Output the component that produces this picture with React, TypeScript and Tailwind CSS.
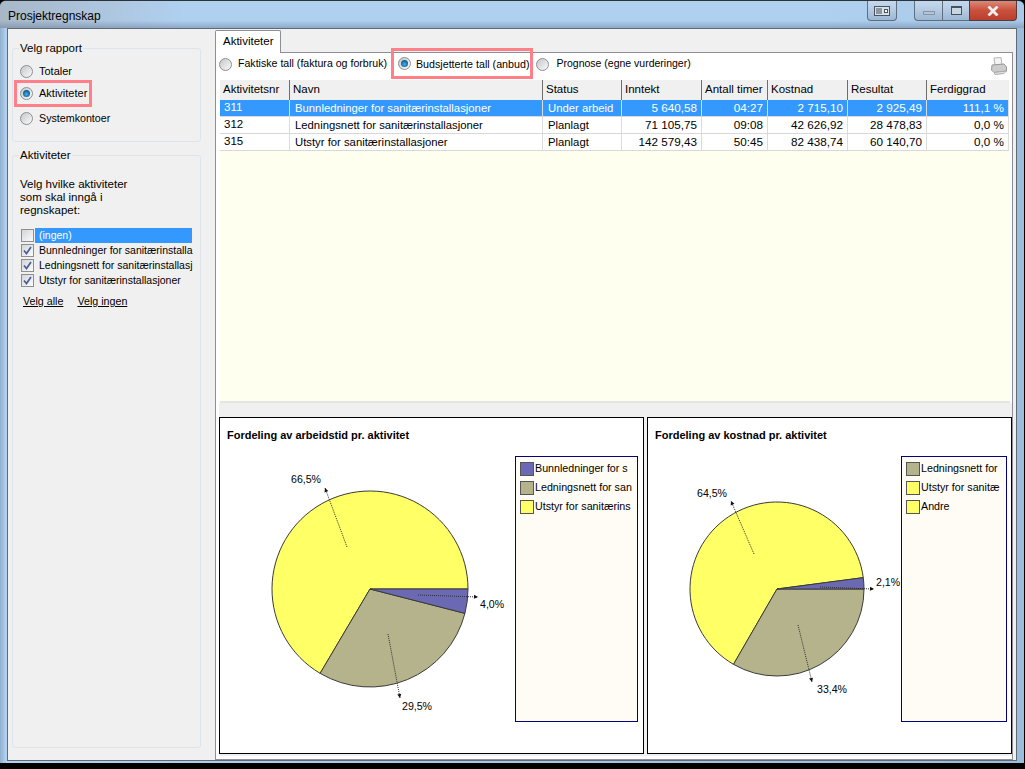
const font = { fontFamily: '"Liberation Sans", Arial, sans-serif' };

function Radio({ checked }: { checked?: boolean }) {
  return (
    <span className="flex h-[13px] w-[13px] shrink-0 items-center justify-center rounded-full border border-[#8c8f94] bg-[linear-gradient(135deg,#c4c6c8,#fbfbfb)]">
      {checked && (
        <span className="h-[7px] w-[7px] rounded-full bg-[radial-gradient(circle_at_50%_60%,#3fb4ea,#0d5b8c_70%,#1c3f5c)]" />
      )}
    </span>
  );
}

function Check({ checked }: { checked?: boolean }) {
  return (
    <span className="flex h-[13px] w-[13px] shrink-0 items-center justify-center border border-[#8e8f8f] bg-[linear-gradient(135deg,#d4d5d8,#fbfbfb)]">
      {checked && (
        <svg width="9" height="9" viewBox="0 0 9 9">
          <path d="M1 4.5 L3.5 7.5 L8 1" fill="none" stroke="#4a5f97" strokeWidth="1.7" />
        </svg>
      )}
    </span>
  );
}

function CaptionIcons() {
  const glass = 'bg-[linear-gradient(#c4d8ec,#b4cce4_45%,#9db8d2)] border-[#5f6f80]';
  return (
    <div className="flex h-[20px] items-start">
      <div className={`mr-[17px] flex h-[20px] w-[30px] items-center justify-center rounded-b-[4px] border border-t-0 ${glass}`}>
        <svg width="16" height="10" viewBox="0 0 16 10">
          <rect x="0.5" y="0.5" width="15" height="9" fill="#d8e0e8" stroke="#4a545e" />
          <rect x="2" y="2" width="6" height="6" fill="#8c97a3" />
          <rect x="10.5" y="3.5" width="3" height="3" fill="#fff" stroke="#4a545e" />
        </svg>
      </div>
      <div className={`flex h-[20px] w-[28px] items-center justify-center rounded-bl-[4px] border border-t-0 border-r-0 ${glass}`}>
        <span className="mt-[4px] h-[4px] w-[12px] border border-[#8796a6] bg-[#b6c4d2]" />
      </div>
      <div className={`flex h-[20px] w-[27px] items-center justify-center border border-t-0 border-r-0 ${glass}`}>
        <span className="h-[9px] w-[11px] border border-t-2 border-[#47515c] bg-[#c8d6e4]" />
      </div>
      <div className="flex h-[20px] w-[48px] items-center justify-center rounded-br-[4px] border border-t-0 border-[#5a3a36] bg-[linear-gradient(#dc8a78,#c8503c_50%,#b8402c)]">
        <svg width="12" height="10" viewBox="0 0 12 10">
          <path d="M1.5 0.5 L10.5 9.5 M10.5 0.5 L1.5 9.5" stroke="#f0f0f0" strokeWidth="2.8" />
        </svg>
      </div>
    </div>
  );
}

function Printer() {
  return (
    <svg width="16" height="18" viewBox="0 0 16 18">
      <path d="M3 1 L10 0.5 L11 8 L4 8 Z" fill="#f4f4f4" stroke="#b4b4b4" />
      <path d="M1 8 L13 7 L15.5 10 L15.5 14 L3 15.5 L0.5 13 Z" fill="#cccccc" stroke="#989898" />
      <path d="M3 15.5 L15.5 14 L13 16.5 L4 17.5 Z" fill="#e4e4e4" stroke="#acacac" />
    </svg>
  );
}

const cols = [
  { label: 'Aktivitetsnr', w: 'w-[70px]' },
  { label: 'Navn', w: 'w-[253px]' },
  { label: 'Status', w: 'w-[79px]' },
  { label: 'Inntekt', w: 'w-[80px]' },
  { label: 'Antall timer', w: 'w-[66px]' },
  { label: 'Kostnad', w: 'w-[80px]' },
  { label: 'Resultat', w: 'w-[79px]' },
  { label: 'Ferdiggrad', w: 'w-[82px]' },
];

const rows = [
  ['311', 'Bunnledninger for sanitærinstallasjoner', 'Under arbeid', '5 640,58', '04:27', '2 715,10', '2 925,49', '111,1 %'],
  ['312', 'Ledningsnett for sanitærinstallasjoner', 'Planlagt', '71 105,75', '09:08', '42 626,92', '28 478,83', '0,0 %'],
  ['315', 'Utstyr for sanitærinstallasjoner', 'Planlagt', '142 579,43', '50:45', '82 438,74', '60 140,70', '0,0 %'],
];

function Grid() {
  return (
    <div className="h-[323px] bg-[#fffff0] border-b-2 border-[#e4e4e4]">
      <div className="flex h-[20px] w-[789px] bg-[#f0f0f0]">
        {cols.map((c) => (
          <div key={c.label} className={`${c.w} flex shrink-0 items-center border-r border-[#6e6e6e] pl-[3px] text-[11.5px] text-black last:border-r-0`}>
            {c.label}
          </div>
        ))}
      </div>
      {rows.map((r, ri) => (
        <div
          key={r[0]}
          className={`flex h-[17px] w-[789px] border-b border-[#d8d8d8] ${ri === 0 ? 'bg-[#3399ff] text-white' : 'bg-white text-black'}`}
        >
          {r.map((v, i) => (
            <div
              key={i}
              className={`${cols[i].w} flex shrink-0 items-center border-r border-[#dcdcdc] whitespace-nowrap ${
                i > 2 ? 'justify-end pr-[4px] text-[11.7px]' : i === 0 ? 'pl-[4px] text-[11.5px]' : 'pl-[5px] text-[11.3px]'
              }`}
            >
              {v}
            </div>
          ))}
        </div>
      ))}
    </div>
  );
}

function Leader({ x1, y1, x2, y2 }: { x1: number; y1: number; x2: number; y2: number }) {
  const a = (Math.atan2(y2 - y1, x2 - x1) * 180) / Math.PI;
  return (
    <>
      <line x1={x1} y1={y1} x2={x2} y2={y2} stroke="#303030" strokeWidth="1" strokeDasharray="1 1" />
      <path d="M0 0 L-4 -2 L-4 2 Z" fill="#101010" transform={`translate(${x2} ${y2}) rotate(${a})`} />
    </>
  );
}

function pt(cx: number, cy: number, r: number, deg: number) {
  const a = (deg * Math.PI) / 180;
  return `${cx + r * Math.cos(a)} ${cy + r * Math.sin(a)}`;
}

function wedge(cx: number, cy: number, r: number, from: number, to: number) {
  const large = to - from > 180 ? 1 : 0;
  return `M${cx} ${cy} L${pt(cx, cy, r, from)} A${r} ${r} 0 ${large} 1 ${pt(cx, cy, r, to)} Z`;
}

const PURPLE = '#6b69b3';
const TAN = '#b4b38c';
const YELLOW = '#ffff66';

function LegendRow({ color, label }: { color: string; label: string }) {
  return (
    <div className="flex h-[19px] items-center whitespace-nowrap text-[10.7px] text-black">
      <span className="mr-[1px] h-[14px] w-[14px] shrink-0 border border-[#555555]" style={{ background: color }} />
      {label}
    </div>
  );
}

function Chart({
  title,
  width,
  legendW,
  viewBox,
  svgW,
  legend,
  children,
}: {
  title: string;
  width: string;
  legendW: string;
  viewBox: string;
  svgW: number;
  legend: { color: string; label: string }[];
  children: React.ReactNode;
}) {
  return (
    <div className={`${width} flex h-[337px] shrink-0 flex-col border border-black bg-white`}>
      <div className="h-[38px] pl-[7px] pt-[10px] text-[11px] font-bold leading-[14px] text-black">{title}</div>
      <div className="flex h-[266px]">
        <svg width={svgW} height="266" viewBox={viewBox} className="shrink-0">
          {children}
        </svg>
        <div className={`${legendW} shrink-0 border border-[#000080] bg-[#fffcf6] pl-[4px] pt-[2px]`}>
          {legend.map((l) => (
            <LegendRow key={l.label} {...l} />
          ))}
        </div>
      </div>
    </div>
  );
}

export default function App() {
  return (
    <div className="h-[769px] w-[1025px] overflow-hidden bg-black" style={font}>
      <div className="flex h-[763px] w-[1024px] flex-col rounded-t-[6px] border-t border-[#2c3238] bg-[linear-gradient(90deg,#8fb0d0,#b4d2f0_0.6%,#9cbcdc_100%)]">
        <div className="flex h-[27px] shrink-0 items-start justify-between rounded-t-[6px] bg-[linear-gradient(transparent_72%,rgba(90,110,140,0.4)),linear-gradient(90deg,#a8b8c8,#b0d0f0_18%,#b0d0f0_80%,#a8c8e8)] px-[7px]">
          <div className="pl-[1px] pt-[8px] text-[12px] leading-[14px] text-black">Prosjektregnskap</div>
          <CaptionIcons />
        </div>
        <div className="flex min-h-0 flex-1 px-[7px] pb-[2px]">
          <div className="flex min-w-0 flex-1 border border-[#5f6b78] bg-[#f0f0f0] text-[11px] text-black">
            <div className="flex w-[207px] shrink-0 flex-col pl-[4px] pt-[19px]">
              <div className="h-[94px] w-[189px] rounded-[3px] border border-[#dce4ec]">
                <div className="-mt-[7px] ml-[6px] w-fit bg-[#f0f0f0] px-[1px] text-[11.5px] leading-[13px]">Velg rapport</div>
                <div className="ml-[7px] mt-[5px] flex h-[22px] items-center gap-[6px]">
                  <Radio />
                  Totaler
                </div>
                <div className="relative ml-[7px] flex h-[22px] items-center gap-[6px]">
                  <Radio checked />
                  Aktiviteter
                  <span className="absolute -left-[6px] -top-[2px] h-[27px] w-[78px] border-[3px] border-[#ff8088]" />
                </div>
                <div className="ml-[7px] mt-[3px] flex h-[22px] items-center gap-[6px] text-[10.7px]">
                  <Radio />
                  Systemkontoer
                </div>
              </div>
              <div className="mt-[13px] h-[593px] w-[189px] rounded-[3px] border border-[#dce4ec]">
                <div className="-mt-[7px] ml-[6px] w-fit bg-[#f0f0f0] px-[1px] text-[11.5px] leading-[13px]">Aktiviteter</div>
                <div className="ml-[7px] mt-[16px] text-[11.5px] leading-[13px]">
                  Velg hvilke aktiviteter
                  <br />
                  som skal inngå i
                  <br />
                  regnskapet:
                </div>
                <div className="ml-[8px] mt-[11px] w-[171px] text-[10.5px]">
                  {[
                    ['(ingen)', false],
                    ['Bunnledninger for sanitærinstalla', true],
                    ['Ledningsnett for sanitærinstallasj', true],
                    ['Utstyr for sanitærinstallasjoner', true],
                  ].map(([label, on], i) => (
                    <div key={label as string} className="flex h-[15px] items-center gap-[1px] whitespace-nowrap">
                      <Check checked={on as boolean} />
                      <span className={`flex h-[15px] flex-1 items-center pl-[4px] ${i === 0 ? 'bg-[#3399ff] text-white' : ''}`}>
                        {label as string}
                      </span>
                    </div>
                  ))}
                </div>
                <div className="ml-[10px] mt-[5px] flex gap-[14px] text-[10.7px] underline">
                  <span>Velg alle</span>
                  <span>Velg ingen</span>
                </div>
              </div>
            </div>
            <div className="flex min-w-0 flex-1 flex-col pr-[3px] pt-[1px]">
              <div className="relative z-10 -mb-px h-[23px] w-[66px] shrink-0 rounded-t-[2px] border border-b-0 border-[#8c8f94] bg-white pl-[7px] pt-[2px] text-[11.5px]">
                Aktiviteter
              </div>
              <div className="flex min-h-0 flex-1 flex-col border border-[#8c8f94] bg-white pb-[3px] pl-[3px]">
                <div className="flex h-[27px] shrink-0 items-center pb-[5px]">
                  <Radio />
                  <span className="ml-[6px] whitespace-nowrap text-[10.6px]">Faktiske tall (faktura og forbruk)</span>
                  <div className="relative ml-[11px] flex items-center">
                    <Radio checked />
                    <span className="ml-[5px] whitespace-nowrap text-[10.7px]">Budsjetterte tall (anbud)</span>
                    <span className="absolute -left-[7px] -top-[8px] h-[31px] w-[142px] border-[3px] border-[#ff8088]" />
                  </div>
                  <div className="ml-[7px]">
                    <Radio />
                  </div>
                  <span className="ml-[7px] whitespace-nowrap text-[10.5px]">Prognose (egne vurderinger)</span>
                  <span className="ml-auto mr-[5px] mt-[4px]">
                    <Printer />
                  </span>
                </div>
                <div className="ml-[1px] mr-[2px]">
                  <Grid />
                </div>
                <div className="flex flex-1 gap-[3px] bg-[#f0f0f0] pt-[14px]">
                  <Chart
                    title="Fordeling av arbeidstid pr. aktivitet"
                    width="w-[425px]"
                    legendW="w-[123px]"
                    viewBox="220 456 295 266"
                    svgW={295}
                    legend={[
                      { color: PURPLE, label: 'Bunnledninger for s' },
                      { color: TAN, label: 'Ledningsnett for san' },
                      { color: YELLOW, label: 'Utstyr for sanitærins' },
                    ]}
                  >
                    <g stroke="#3a3a3a" strokeWidth="1">
                      <path d={wedge(370, 589, 98, 120.6, 360)} fill={YELLOW} />
                      <path d={wedge(370, 589, 98, 14.4, 120.6)} fill={TAN} />
                      <path d={wedge(370, 589, 98, 0, 14.4)} fill={PURPLE} />
                    </g>
                    <Leader x1={347} y1={547} x2={325} y2={488} />
                    <Leader x1={418} y1={595} x2={478} y2={597} />
                    <Leader x1={388} y1={634} x2={400} y2={698} />
                    <g fontSize="10.6" fill="#000">
                      <text x="291" y="483">66,5%</text>
                      <text x="480" y="608">4,0%</text>
                      <text x="402" y="710">29,5%</text>
                    </g>
                  </Chart>
                  <Chart
                    title="Fordeling av kostnad pr. aktivitet"
                    width="w-[365px]"
                    legendW="w-[106px]"
                    viewBox="648 456 253 266"
                    svgW={253}
                    legend={[
                      { color: TAN, label: 'Ledningsnett for' },
                      { color: YELLOW, label: 'Utstyr for sanitæ' },
                      { color: YELLOW, label: 'Andre' },
                    ]}
                  >
                    <g stroke="#3a3a3a" strokeWidth="1">
                      <path d={wedge(777, 589, 87, 120, 352.5)} fill={YELLOW} />
                      <path d={wedge(777, 589, 87, 0, 120)} fill={TAN} />
                      <path d={wedge(777, 589, 87, -7.5, 0)} fill={PURPLE} />
                    </g>
                    <Leader x1={754} y1={554} x2={731} y2={501} />
                    <Leader x1={820} y1={587} x2={874} y2={589} />
                    <Leader x1={798} y1={625} x2={812} y2={682} />
                    <g fontSize="10.6" fill="#000">
                      <text x="697" y="497">64,5%</text>
                      <text x="876" y="586">2,1%</text>
                      <text x="817" y="693">33,4%</text>
                    </g>
                  </Chart>
                </div>
              </div>
            </div>
          </div>
        </div>
      </div>
    </div>
  );
}
